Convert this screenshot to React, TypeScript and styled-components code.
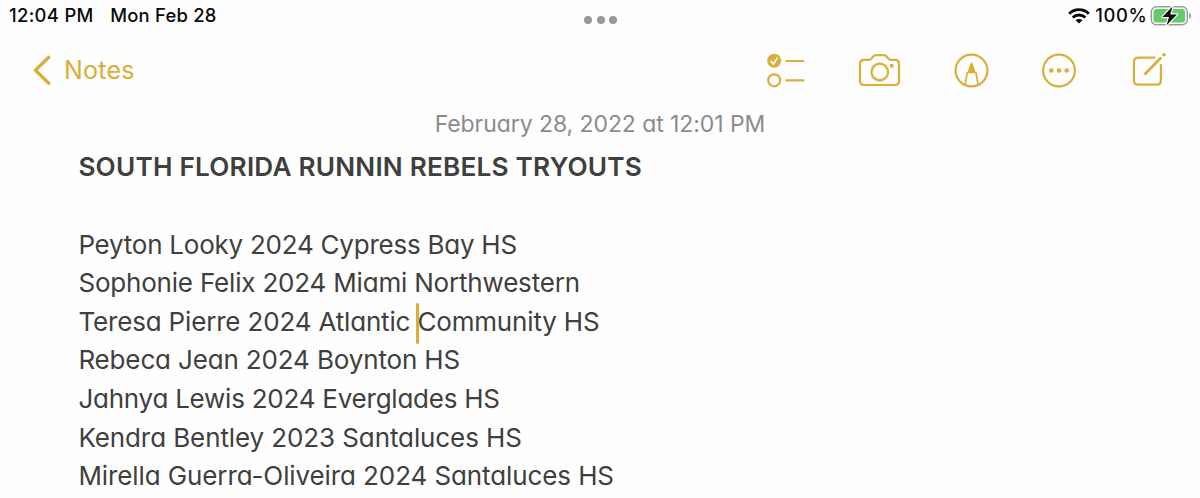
import React from 'react';
import styled, { createGlobalStyle } from 'styled-components';

const GOLD = '#d9ae3a';

const GlobalStyle = createGlobalStyle`
  html, body { margin: 0; padding: 0; background: #fefefe; }
  body { font-family: Inter, 'Liberation Sans', sans-serif; overflow: hidden; }
`;

const Screen = styled.main`
  box-sizing: border-box;
  width: 1200px;
  height: 498px;
  overflow: hidden;
  background: #fefefe;
  display: flex;
  flex-direction: column;
`;

const StatusBar = styled.header`
  display: grid;
  grid-template-columns: 1fr auto 1fr;
  align-items: center;
  height: 32px;
  padding: 0 8px 0 9px;
  color: #0a0a0a;
  font-size: 18.4px;
  font-weight: 500;
  white-space: pre;
`;

const StatusGroup = styled.div<{ $end?: boolean }>`
  display: flex;
  align-items: center;
  height: 32px;
  justify-content: ${(p) => (p.$end ? 'flex-end' : 'flex-start')};
`;

const StatusText = styled.span<{ $spacing?: number; $gap?: number }>`
  letter-spacing: ${(p) => p.$spacing ?? 0}px;
  margin-right: ${(p) => p.$gap ?? 0}px;
  padding-bottom: 2px;
  line-height: 29px;
`;

const Multitask = styled.div`
  display: flex;
  gap: 4.5px;
  padding-top: 7px;
`;

const Dot = styled.i`
  width: 8px;
  height: 8px;
  border-radius: 50%;
  background: #989898;
`;

const NavBar = styled.nav`
  display: flex;
  justify-content: space-between;
  height: 77px;
`;

const BackButton = styled.a`
  display: flex;
  align-items: center;
  gap: 13px;
  height: 76px;
  padding-left: 33px;
  color: ${GOLD};
  font-size: 25px;
  letter-spacing: 0.25px;
`;

const Tools = styled.div`
  display: flex;
  align-items: center;
  height: 76px;
  padding-right: 30px;
`;

const Tool = styled.svg<{ $gap?: number }>`
  display: block;
  fill: none;
  stroke: ${GOLD};
  stroke-width: 2.2;
  stroke-linecap: round;
  stroke-linejoin: round;
  margin-left: ${(p) => p.$gap ?? 0}px;
`;

const Glyph = styled.svg`
  display: block;
`;

const DateLine = styled.time`
  display: block;
  height: 39.4px;
  line-height: 30px;
  text-align: center;
  color: #8b8b8e;
  font-size: 23px;
  letter-spacing: -0.07px;
  font-feature-settings: 'cv11';
`;

const Note = styled.article`
  padding-left: 78.4px;
  color: #3f3f3f;
  font-size: 26px;
  line-height: 38.6px;
  font-feature-settings: 'cv11';
  white-space: pre;
`;

const Title = styled.h1`
  margin: 0 0 38.6px;
  font-size: 26.2px;
  font-weight: 600;
  line-height: 38.6px;
  letter-spacing: 0.2px;
`;

const Line = styled.p<{ $spacing: number }>`
  margin: 0;
  height: 38.6px;
  letter-spacing: ${(p) => p.$spacing}px;
`;

const CaretAnchor = styled.span`
  position: relative;
`;

const Caret = styled.span`
  position: absolute;
  left: -1.5px;
  top: -3px;
  width: 3px;
  height: 41px;
  border-radius: 1.5px;
  background: ${GOLD};
`;

const lines: { text: string; after?: string; spacing: number }[] = [
  { text: 'Peyton Looky 2024 Cypress Bay HS', spacing: -0.24 },
  { text: 'Sophonie Felix 2024 Miami Northwestern', spacing: -0.19 },
  { text: 'Teresa Pierre 2024 Atlantic ', after: 'Community HS', spacing: -0.17 },
  { text: 'Rebeca Jean 2024 Boynton HS', spacing: -0.15 },
  { text: 'Jahnya Lewis 2024 Everglades HS', spacing: -0.24 },
  { text: 'Kendra Bentley 2023 Santaluces HS', spacing: -0.1 },
  { text: 'Mirella Guerra-Oliveira 2024 Santaluces HS', spacing: -0.1 },
];

const WifiIcon = () => (
  <Glyph width="22" height="16" viewBox="0 0 22 16" fill="none" stroke="#0a0a0a" strokeWidth="2.9">
    <path d="M1.2 5.7a13.9 13.9 0 0 1 19.6 0" />
    <path d="M4.7 9.6a8.9 8.9 0 0 1 12.6 0" />
    <path d="M11 15.6l-3.4-3.3a4.8 4.8 0 0 1 6.8 0z" fill="#0a0a0a" stroke="none" />
  </Glyph>
);

const BatteryIcon = () => (
  <Glyph width="42" height="22" viewBox="0 0 42 22">
    <rect x="1.3" y="1.8" width="36" height="18" rx="5.2" fill="#fefefe" stroke="#9b9b9b" strokeWidth="1.4" />
    <rect x="3.5" y="4" width="31.6" height="13.6" rx="3.2" fill="#65cb69" />
    <path d="M39.3 7.6c2.4.9 2.4 5.5 0 6.4z" fill="#9b9b9b" />
    <path
      d="M22.5 1.4L12.4 12h6.6L16.6 20.2 27 9.4h-6.8z"
      fill="#0a0a0a"
      stroke="#fefefe"
      strokeWidth="2.4"
      paintOrder="stroke"
      strokeLinejoin="round"
    />
  </Glyph>
);

export default function App() {
  return (
    <>
      <GlobalStyle />
      <Screen>
        <StatusBar>
          <StatusGroup>
            <StatusText $gap={16.5} $spacing={0.34}>12:04 PM</StatusText>
            <StatusText $spacing={0.24}>Mon Feb 28</StatusText>
          </StatusGroup>
          <Multitask>
            <Dot />
            <Dot />
            <Dot />
          </Multitask>
          <StatusGroup $end>
            <WifiIcon />
            <StatusText $gap={2.7} $spacing={0.6}>{' 100%'}</StatusText>
            <BatteryIcon />
          </StatusGroup>
        </StatusBar>

        <NavBar>
          <BackButton>
            <Glyph width="18" height="30" viewBox="0 0 18 30" fill="none" stroke={GOLD} strokeWidth="3.3" strokeLinecap="round" strokeLinejoin="round">
              <path d="M15.8 2.2L2.4 15.2l13.4 13" />
            </Glyph>
            Notes
          </BackButton>
          <Tools>
            <Tool width="40" height="40" viewBox="766 50 40 40">
              <circle cx="774.2" cy="60.8" r="7" fill={GOLD} stroke="none" />
              <path d="M771.2 61.4l2.2 2.7 3.8-6" stroke="#fefefe" strokeWidth="1.7" />
              <circle cx="774.2" cy="80.3" r="6" />
              <path d="M786.3 61h17.2M786.3 80.3h17.2" />
            </Tool>
            <Tool $gap={52} width="44" height="40" viewBox="858 50 44 40">
              <path d="M864 59.8h5.2c1.1 0 1.7-.4 2.5-1.4l1.3-1.7c.8-1 1.6-1.5 3-1.5h7.8c1.4 0 2.2.5 3 1.5l1.3 1.7c.8 1 1.4 1.4 2.5 1.4h4.4c2.6 0 4 1.3 4 3.9v17.4c0 2.6-1.4 3.9-4 3.9h-31c-2.6 0-4-1.3-4-3.9V63.7c0-2.6 1.4-3.9 4-3.9z" />
              <circle cx="879.8" cy="72" r="8.3" />
              <circle cx="891.7" cy="65.7" r="2" fill={GOLD} stroke="none" />
            </Tool>
            <Tool $gap={49} width="40" height="40" viewBox="951 50 40 40">
              <circle cx="971.5" cy="70.5" r="15.9" />
              <path d="M965.1 84.5l2.2-11.8M978.1 84.5l-2.2-11.8" strokeWidth="1.7" />
              <path d="M967.2 73.2l3.3-9.6c.4-1.2 1.8-1.2 2.2 0l3.3 9.6z" fill={GOLD} stroke="none" />
            </Tool>
            <Tool $gap={48} width="40" height="40" viewBox="1039 50 40 40">
              <circle cx="1059" cy="70.5" r="15.9" />
              <g fill={GOLD} stroke="none">
                <circle cx="1051.3" cy="70.5" r="2.3" />
                <circle cx="1059" cy="70.5" r="2.3" />
                <circle cx="1066.7" cy="70.5" r="2.3" />
              </g>
            </Tool>
            <Tool $gap={51} width="40" height="40" viewBox="1130 50 40 40">
              <path d="M1154.5 57.6h-16.2c-2.8 0-4.4 1.5-4.4 4.4v18.3c0 2.9 1.6 4.4 4.4 4.4h18.2c2.8 0 4.4-1.5 4.4-4.4V65.2" />
              <path d="M1145.3 73.8l15.2-15.6" strokeWidth="2.7" />
              <circle cx="1163.9" cy="54.8" r="1.8" fill={GOLD} stroke="none" />
            </Tool>
          </Tools>
        </NavBar>

        <DateLine>February 28, 2022 at 12:01 PM</DateLine>

        <Note>
          <Title>SOUTH FLORIDA RUNNIN REBELS TRYOUTS</Title>
          {lines.map((line) => (
            <Line key={line.text} $spacing={line.spacing}>
              {line.text}
              {line.after && (
                <CaretAnchor>
                  <Caret />
                  {line.after}
                </CaretAnchor>
              )}
            </Line>
          ))}
        </Note>
      </Screen>
    </>
  );
}
